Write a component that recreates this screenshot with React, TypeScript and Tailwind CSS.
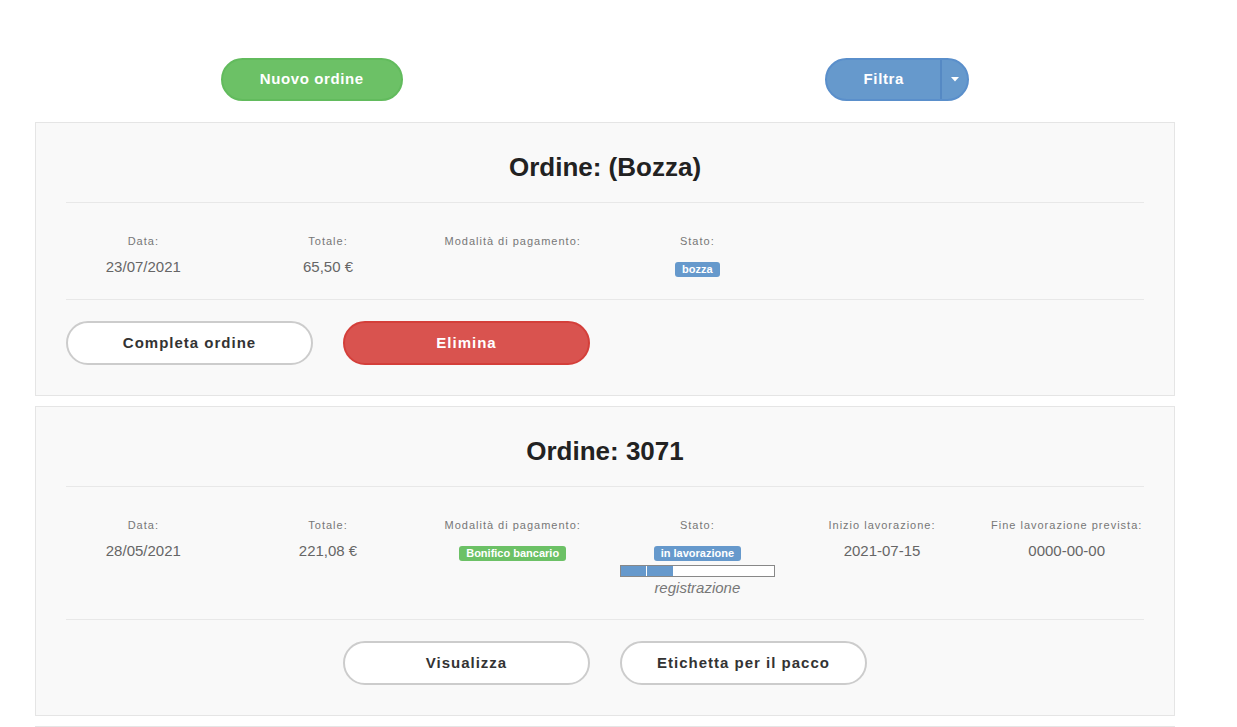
import React from "react";

const font = { fontFamily: '"Liberation Sans", Arial, sans-serif' };

function Label({ children }: { children: React.ReactNode }) {
  return (
    <div className="text-[11px] leading-[16px] tracking-[1px] text-[#777]">{children}</div>
  );
}

function Col({ label, children }: { label: string; children?: React.ReactNode }) {
  return (
    <div className="px-[15px] text-center">
      <Label>{label}</Label>
      <div className="mt-[8px] text-[15px] leading-[20px] text-[#666] min-h-[20px]">{children}</div>
    </div>
  );
}

function Badge({ color, children }: { color: string; children: React.ReactNode }) {
  return (
    <span
      className={`inline-block align-top mt-[5px] h-[15px] rounded-[3px] px-[7px] text-[11px] font-bold leading-[15px] text-white ${color}`}
    >
      {children}
    </span>
  );
}

function OutlineBtn({ children }: { children: React.ReactNode }) {
  return (
    <button className="w-full h-[44px] rounded-full border-2 border-[#cccccc] bg-white text-[15px] font-bold tracking-[1px] text-[#333]">
      {children}
    </button>
  );
}

export default function App() {
  return (
    <div style={font} className="min-h-[727px] bg-white pl-[35px] pt-[58px]">
      <div className="w-[1140px]">
        <div className="-ml-px grid grid-cols-2 gap-[30px]">
          <div className="flex justify-center">
            <button className="h-[43px] w-[182px] rounded-full border-2 border-[#62bb5d] bg-[#6cc166] text-[15px] font-bold tracking-[0.6px] text-white">
              Nuovo ordine
            </button>
          </div>
          <div className="flex justify-center">
            <div className="flex h-[43px] w-[144px] overflow-hidden rounded-full border-2 border-[#5a8fcb] bg-[#6699cc]">
              <button className="flex-1 text-[15px] font-bold tracking-[0.6px] text-white">Filtra</button>
              <div className="w-[2px] bg-[#5589c4]" />
              <button className="flex w-[25px] items-center justify-center">
                <svg width="8" height="5" viewBox="0 0 8 5">
                  <path d="M0 0 L8 0 L4 4.5 Z" fill="#ffffff" />
                </svg>
              </button>
            </div>
          </div>
        </div>

        {/* Card 1 */}
        <div className="mt-[21px] border border-[#e5e5e5] bg-[#f9f9f9] px-[30px] pt-[29px] pb-[30px]">
          <h3 className="text-center text-[26px] font-bold leading-[30px] text-[#222]">Ordine: (Bozza)</h3>
          <div className="mt-[20px] h-px bg-[#e8e8e8]" />
          <div className="-mx-[15px] grid grid-cols-6 pt-[30px] pb-[22px]">
            <Col label="Data:">23/07/2021</Col>
            <Col label="Totale:">65,50 €</Col>
            <Col label="Modalità di pagamento:" />
            <div className="px-[15px] text-center">
              <Label>Stato:</Label>
              <div className="mt-[8px] leading-[20px]">
                <Badge color="bg-[#6699cc]">bozza</Badge>
              </div>
            </div>
            <div />
            <div />
          </div>
          <div className="h-px bg-[#e8e8e8]" />
          <div className="-mx-[15px] mt-[21px] grid grid-cols-4">
            <div className="px-[15px]">
              <OutlineBtn>Completa ordine</OutlineBtn>
            </div>
            <div className="px-[15px]">
              <button className="h-[44px] w-full rounded-full border-2 border-[#d43f3a] bg-[#d9534f] text-[15px] font-bold tracking-[1px] text-white">
                Elimina
              </button>
            </div>
          </div>
        </div>

        {/* Card 2 */}
        <div className="mt-[10px] border border-[#e5e5e5] bg-[#f9f9f9] px-[30px] pt-[29px] pb-[30px]">
          <h3 className="text-center text-[26px] font-bold leading-[30px] text-[#222]">Ordine: 3071</h3>
          <div className="mt-[20px] h-px bg-[#e8e8e8]" />
          <div className="-mx-[15px] grid grid-cols-6 pt-[30px] pb-[21px]">
            <Col label="Data:">28/05/2021</Col>
            <Col label="Totale:">221,08 €</Col>
            <div className="px-[15px] text-center">
              <Label>Modalità di pagamento:</Label>
              <div className="mt-[8px] leading-[20px]">
                <Badge color="bg-[#6cc166]">Bonifico bancario</Badge>
              </div>
            </div>
            <div className="px-[15px] text-center">
              <Label>Stato:</Label>
              <div className="mt-[8px] leading-[20px]">
                <Badge color="bg-[#6699cc]">in lavorazione</Badge>
              </div>
              <div className="mx-auto mt-[4px] flex h-[12px] w-[155px] border border-[#888] bg-white">
                <div className="h-full w-[26px] border-r border-white bg-[#6699cc]" />
                <div className="h-full w-[26px] bg-[#6699cc]" />
              </div>
              <div className="mt-[1px] text-[15px] italic leading-[20px] text-[#777]">registrazione</div>
            </div>
            <Col label="Inizio lavorazione:">2021-07-15</Col>
            <Col label="Fine lavorazione prevista:">0000-00-00</Col>
          </div>
          <div className="h-px bg-[#e8e8e8]" />
          <div className="-mx-[15px] mt-[21px] grid grid-cols-4">
            <div className="col-start-2 px-[15px]">
              <OutlineBtn>Visualizza</OutlineBtn>
            </div>
            <div className="px-[15px]">
              <OutlineBtn>Etichetta per il pacco</OutlineBtn>
            </div>
          </div>
        </div>

        {/* Card 3 (partial) */}
        <div className="mt-[10px] h-[200px] border border-[#e5e5e5] bg-[#f9f9f9]" />
      </div>
    </div>
  );
}
